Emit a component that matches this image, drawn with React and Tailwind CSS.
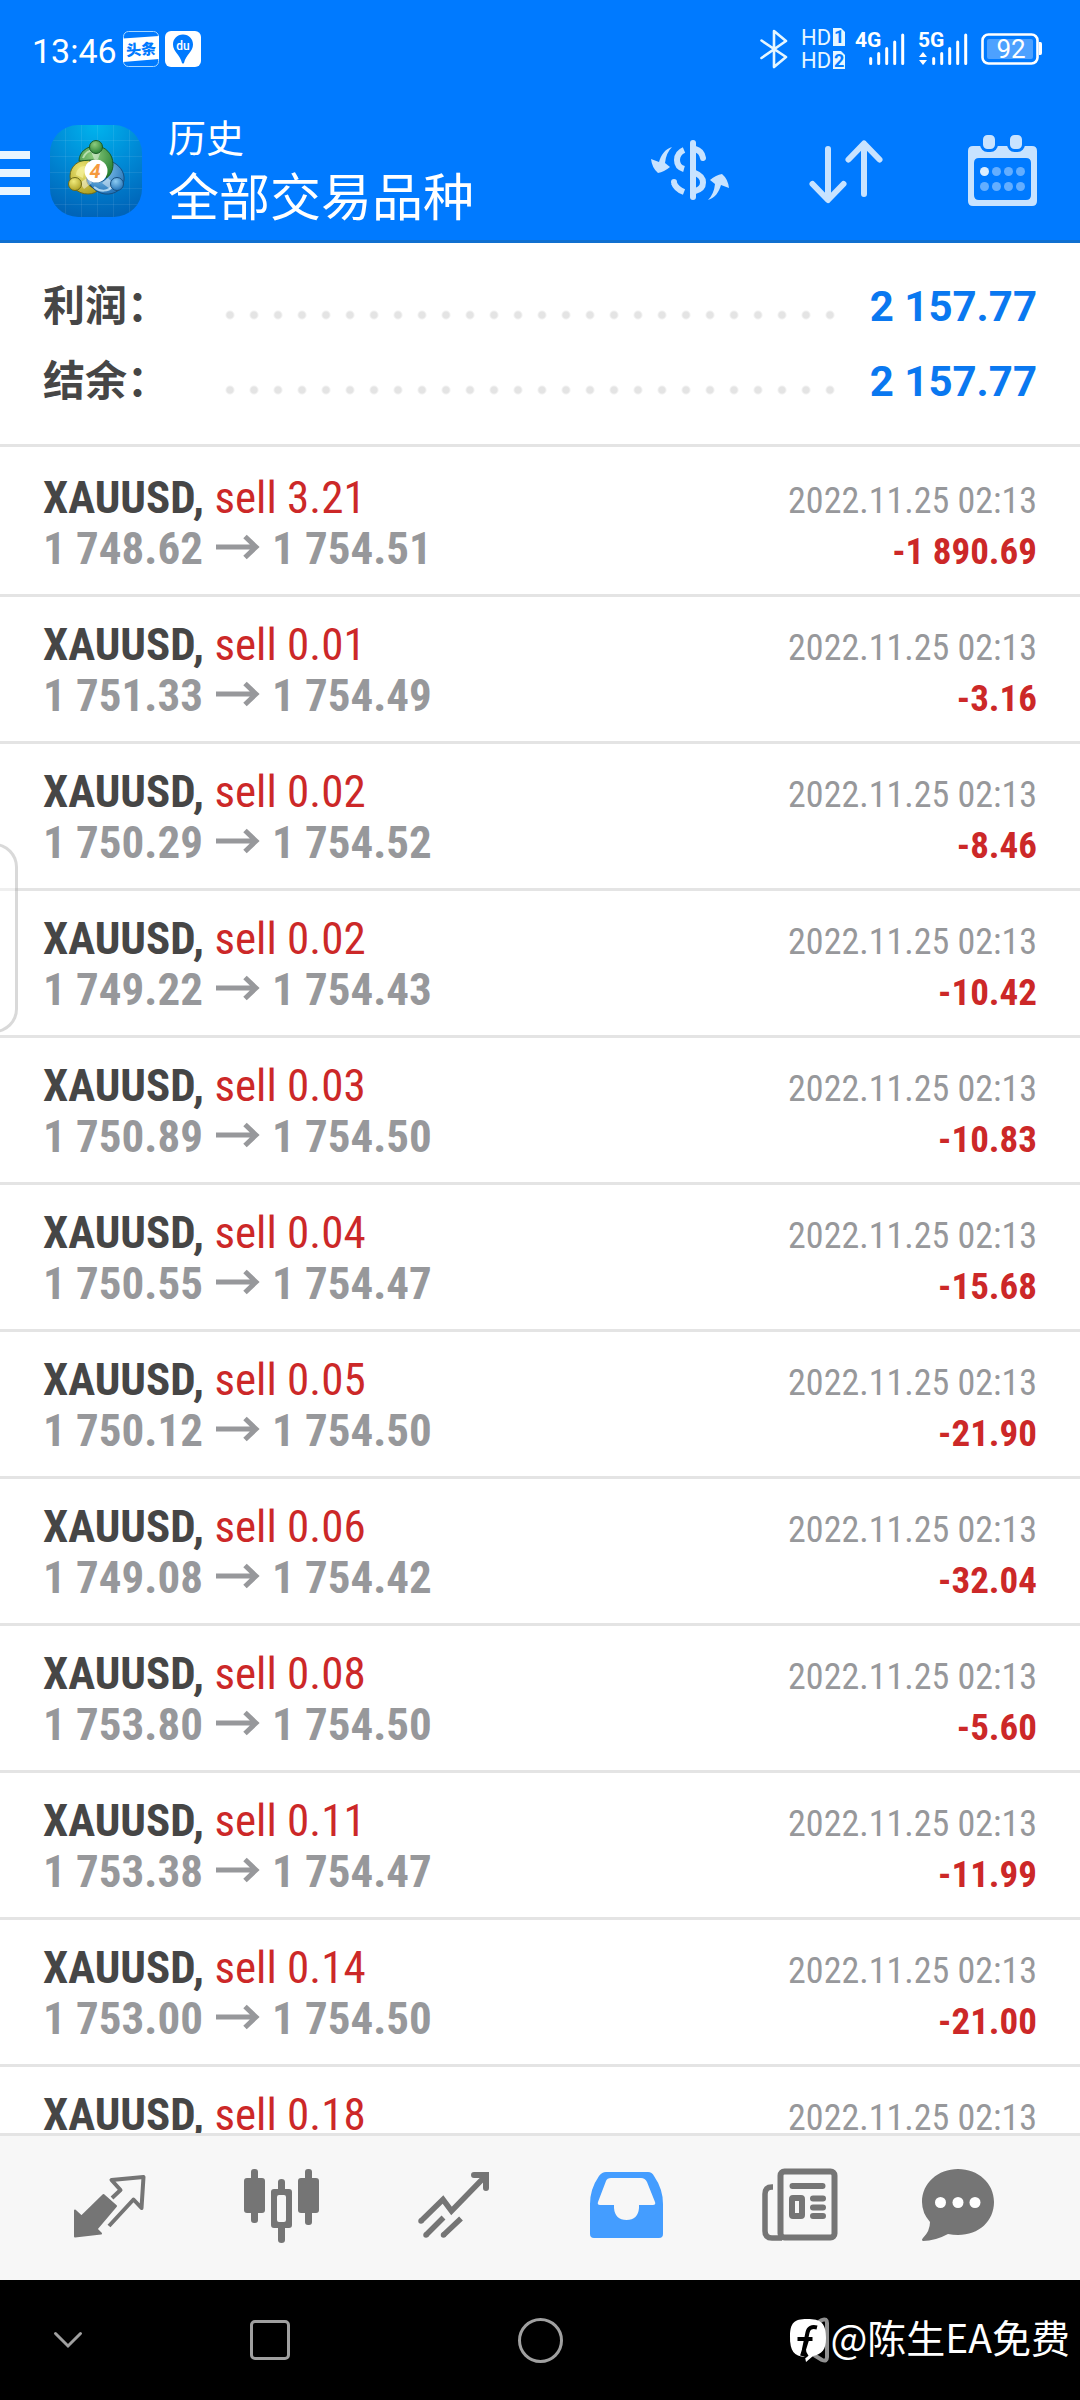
import React from 'react';

const deals = [
    { id: 1, symbol: 'XAUUSD', side: 'sell', volume: '3.21', open: '1 748.62', close: '1 754.51', time: '2022.11.25 02:13', profit: '-1 890.69' },
    { id: 2, symbol: 'XAUUSD', side: 'sell', volume: '0.01', open: '1 751.33', close: '1 754.49', time: '2022.11.25 02:13', profit: '-3.16' },
    { id: 3, symbol: 'XAUUSD', side: 'sell', volume: '0.02', open: '1 750.29', close: '1 754.52', time: '2022.11.25 02:13', profit: '-8.46' },
    { id: 4, symbol: 'XAUUSD', side: 'sell', volume: '0.02', open: '1 749.22', close: '1 754.43', time: '2022.11.25 02:13', profit: '-10.42' },
    { id: 5, symbol: 'XAUUSD', side: 'sell', volume: '0.03', open: '1 750.89', close: '1 754.50', time: '2022.11.25 02:13', profit: '-10.83' },
    { id: 6, symbol: 'XAUUSD', side: 'sell', volume: '0.04', open: '1 750.55', close: '1 754.47', time: '2022.11.25 02:13', profit: '-15.68' },
    { id: 7, symbol: 'XAUUSD', side: 'sell', volume: '0.05', open: '1 750.12', close: '1 754.50', time: '2022.11.25 02:13', profit: '-21.90' },
    { id: 8, symbol: 'XAUUSD', side: 'sell', volume: '0.06', open: '1 749.08', close: '1 754.42', time: '2022.11.25 02:13', profit: '-32.04' },
    { id: 9, symbol: 'XAUUSD', side: 'sell', volume: '0.08', open: '1 753.80', close: '1 754.50', time: '2022.11.25 02:13', profit: '-5.60' },
    { id: 10, symbol: 'XAUUSD', side: 'sell', volume: '0.11', open: '1 753.38', close: '1 754.47', time: '2022.11.25 02:13', profit: '-11.99' },
    { id: 11, symbol: 'XAUUSD', side: 'sell', volume: '0.14', open: '1 753.00', close: '1 754.50', time: '2022.11.25 02:13', profit: '-21.00' },
    { id: 12, symbol: 'XAUUSD', side: 'sell', volume: '0.18', time: '2022.11.25 02:13' },
];

const summary = [
    { label: '利润：', value: '2 157.77' },
    { label: '结余：', value: '2 157.77' },
];

const BluetoothIcon = () => (
    <svg className="w-[28px] h-[40px]" viewBox="0 0 28 40" fill="none" stroke="#E6F6FF" strokeWidth="2.6" strokeLinecap="round" strokeLinejoin="round">
        <path d="M1.5 11.5 26 28 14 38V2l12 10L1.5 29" />
    </svg>
);

const HdIcon = () => (
    <svg className="w-[44px] h-[42px] overflow-visible font-['Roboto']" viewBox="0 0 44 42" fill="#E6F6FF" fontSize="22">
        <text x="0" y="17">HD</text>
        <text x="0" y="40">HD</text>
        <path d="M32 0h8l4 4v14H32zM32 23h8l4 4v14H32z" />
        <g fill="#007AFF" fontSize="18" fontWeight="700">
            <text x="33" y="15">1</text>
            <text x="33" y="39">2</text>
        </g>
    </svg>
);

const SignalIcon = ({ label, traffic }) => (
    <svg className="w-[50px] h-[38px] overflow-visible font-['Roboto']" viewBox="0 0 50 38" fill="white">
        <text x="0" y="17" fontSize="21" fontWeight="700">{label}</text>
        <path d="M15.7 28.5v5M23.7 23.5v10M31.7 18.5v15M39.7 12v21.5M47.7 5v28.5" stroke="white" strokeWidth="3" strokeLinecap="round" />
        {traffic && <path d="M5 22l4 5H1zM5 35l4-5H1z" />}
    </svg>
);

const BatteryIcon = () => (
    <svg className="w-[61px] h-[32px] font-['Roboto']" viewBox="0 0 61 32">
        <rect x="1.5" y="1.5" width="55" height="29" rx="6" fill="none" stroke="white" strokeWidth="2.6" />
        <rect x="6" y="6" width="46" height="20" rx="2" fill="#4DA1FF" />
        <path d="M58 9h1.500q1.500 0 1.500 2v9q0 2-1.500 2H58z" fill="white" />
        <text x="30" y="25" fontSize="26" textAnchor="middle" fill="white">92</text>
    </svg>
);

const ToutiaoIcon = () => (
    <svg className="w-[36px] h-[36px] font-['Noto_Sans_CJK_SC']" viewBox="0 0 36 36">
        <rect x=".5" y=".5" width="35" height="35" rx="5" fill="none" stroke="#A6D6FF" />
        <path d="M0 7.500 36 5v23L0 31z" fill="white" />
        <text x="18" y="24" fontSize="15" fontWeight="900" textAnchor="middle" fill="#007AFF" transform="rotate(-4 18 18)">头条</text>
    </svg>
);

const BaiduMapIcon = () => (
    <svg className="w-[36px] h-[36px] font-['Roboto']" viewBox="0 0 36 36">
        <rect width="36" height="36" rx="6" fill="white" />
        <path d="M18 3.500c-6 0-10 4.500-10 10 0 7 7 10 9 18.500q1 1 2 0c2-8.500 9-11.500 9-18.500 0-5.500-4-10-10-10z" fill="#007AFF" />
        <text x="18" y="18.500" fontSize="12" fontWeight="500" textAnchor="middle" fill="white">du</text>
    </svg>
);

const MenuIcon = () => (
    <svg className="w-[30px] h-[56px]" viewBox="0 0 30 56" fill="#E9F5FF">
        <path d="M0 10h30v8H0zM0 28h30v8H0zM0 46h30v8H0z" />
    </svg>
);

const AppLogo = () => (
    <svg className="w-[92px] h-[92px] shrink-0" viewBox="0 0 92 92">
        <defs>
            <radialGradient id="tile" cx=".5" cy="0" r="1">
                <stop offset="0" stopColor="#00B4EE" />
                <stop offset=".5" stopColor="#008AD6" />
                <stop offset="1" stopColor="#0064B8" />
            </radialGradient>
            <radialGradient id="green" cx=".4" cy=".3" r=".8">
                <stop offset="0" stopColor="#8CCB7E" />
                <stop offset="1" stopColor="#1E7A2C" />
            </radialGradient>
            <radialGradient id="yellow" cx=".4" cy=".3" r=".8">
                <stop offset="0" stopColor="#F0EA7A" />
                <stop offset="1" stopColor="#A89A1C" />
            </radialGradient>
            <radialGradient id="blue" cx=".4" cy=".3" r=".8">
                <stop offset="0" stopColor="#8CCBF2" />
                <stop offset="1" stopColor="#1668B0" />
            </radialGradient>
            <clipPath id="tileClip">
                <rect width="92" height="92" rx="28" />
            </clipPath>
        </defs>
        <rect width="92" height="92" rx="28" fill="url(#tile)" />
        <g clipPath="url(#tileClip)" stroke="white" strokeOpacity=".08" strokeWidth="1">
            <path d="M15.500 0v92M31.500 0v92M47.500 0v92M63.500 0v92M79.500 0v92M0 15.500h92M0 31.500h92M0 47.500h92M0 63.500h92M0 79.500h92" />
        </g>
        {/* yellow figure */}
        <path d="M40 35c-11-1-20 6-20 16 0 11 8 18 18 18 5 0 9-2 11-5-8 0-14-5-12-12z" fill="url(#yellow)" stroke="#6E6A18" strokeWidth="1" />
        <path d="M26 50c0-5 4-9 9-9l-2 12z" fill="#F3EF9A" opacity=".7" />
        {/* blue figure */}
        <path d="M60 36c9 3 15 11 14 19-1 9-9 15-19 14-8-1-15-7-18-15 8 5 17 4 21-3z" fill="url(#blue)" stroke="#174F80" strokeWidth="1" />
        <path d="M44 62c6 5 14 5 19-1" fill="none" stroke="#C9E9FB" strokeWidth="2" opacity=".8" />
        {/* green figure */}
        <path d="M29 36c0-9 8-15 17-15s17 8 17 18c0 7-3 12-7 14 2-9-3-17-13-18-6 0-11 1-14 1z" fill="url(#green)" stroke="#1A5A24" strokeWidth="1" />
        <path d="M33 33c2-5 6-8 12-8" fill="none" stroke="#C7E9BE" strokeWidth="2" opacity=".8" />
        <path d="M41 26h10l-3 8h-4zM30 58l8-6 4 6-8 6zM52 58l6-5 5 5-3 6z" fill="white" opacity=".45" />
        <circle cx="46" cy="22" r="6.500" fill="url(#green)" stroke="#1A5A24" strokeWidth="1" />
        <circle cx="25" cy="59" r="6.500" fill="url(#yellow)" stroke="#6E6A18" strokeWidth="1" />
        <circle cx="67" cy="59" r="6.500" fill="url(#blue)" stroke="#174F80" strokeWidth="1" />
        <circle cx="46" cy="46" r="11.500" fill="white" />
        <text className="font-['Roboto']" x="45" y="53" fontSize="20" fontWeight="700" fontStyle="italic" textAnchor="middle" fill="#F59A3E">4</text>
    </svg>
);

const CurrencyIcon = () => (
    <svg className="w-[90px] h-[90px]" viewBox="0 0 90 90" fill="none" stroke="#C8E3FF" strokeWidth="6">
        <path d="M48 19v54" strokeLinecap="round" />
        <path d="M39 26q-7 3-7 10t7 9M29 59q2 6 10 9" />
        <path d="M50 25q7 2 8 9" strokeLinecap="round" />
        <path d="M50 49q8 3 8 9.500T50 67" />
        <circle cx="29" cy="58" r="3" fill="#C8E3FF" stroke="none" />
        <g fill="#C8E3FF" stroke="none">
            <path d="M27 23c-7 2-11 8-13 15l-8-3q1 9 7 14 6-1 12-6l-5-4q1-10 7-16z" />
            <path d="M27 23c-7 2-11 8-13 15l-8-3q1 9 7 14 6-1 12-6l-5-4q1-10 7-16z" transform="rotate(180 45 49.500)" />
        </g>
    </svg>
);

const SortIcon = () => (
    <svg className="w-[90px] h-[90px]" viewBox="0 0 90 90" fill="none" stroke="#C8E3FF" strokeWidth="6" strokeLinecap="round" strokeLinejoin="round">
        <path d="M27 25v50M11.500 60 27 76l15.500-16M63 70V20M47.500 35.500 63 19.500l15.500 16" />
    </svg>
);

const CalendarIcon = () => (
    <svg className="w-[90px] h-[90px]" viewBox="0 0 90 90">
        <path d="M16 22h59q5 0 5 5v50q0 5-5 5H16q-5 0-5-5V27q0-5 5-5zM22 34q-5 0-5 5v32q0 5 5 5h47q5 0 5-5V39q0-5-5-5z" fill="#C8E3FF" fillRule="evenodd" />
        <g fill="#C8E3FF" stroke="#007AFF" strokeWidth="3">
            <rect x="24.500" y="9.500" width="15" height="17" rx="6" />
            <rect x="51.500" y="9.500" width="15" height="17" rx="6" />
        </g>
        <g fill="#64AEFF">
            <circle cx="39.500" cy="47.500" r="4.500" />
            <circle cx="51.500" cy="47.500" r="4.500" />
            <circle cx="63.500" cy="47.500" r="4.500" />
            <circle cx="27.500" cy="62.500" r="4.500" />
            <circle cx="39.500" cy="62.500" r="4.500" />
            <circle cx="51.500" cy="62.500" r="4.500" />
            <circle cx="63.500" cy="62.500" r="4.500" />
        </g>
        <circle cx="27.500" cy="47.500" r="4.500" fill="#DCEEFF" />
    </svg>
);

const QuotesIcon = () => (
    <svg className="w-[108px] h-[108px]" viewBox="0 0 108 108" stroke="#757575" strokeLinejoin="round">
        <path d="M19 56.500l6.500 6L47.500 41 60 52 40.500 75l4.500 4.500L19 82.500z" fill="#757575" strokeWidth="2" />
        <path d="M56 44 64.500 36 55.500 26l32-3-2 31-8-8.500L53 72" fill="none" strokeWidth="4" />
    </svg>
);

const ChartIcon = () => (
    <svg className="w-[108px] h-[108px]" viewBox="0 0 108 108" fill="#757575">
        <rect x="15" y="24" width="21" height="35" rx="3" />
        <rect x="22" y="15" width="7" height="54" rx="3" />
        <rect x="69" y="24" width="21" height="35" rx="3" />
        <rect x="76" y="15" width="7" height="56" rx="3" />
        <path d="M49 35v-7q0-3 3.500-3t3.500 3v7h4q3 0 3 3v33q0 3-3 3h-4v12q0 3-3.500 3T49 86V74h-4q-3 0-3-3V38q0-3 3-3zM50 41q-2 0-2 2v23q0 2 2 2h5q2 0 2-2V43q0-2-2-2z" fillRule="evenodd" />
    </svg>
);

const TradeIcon = () => (
    <svg className="w-[108px] h-[108px]" viewBox="0 0 108 108" fill="none" stroke="#757575" strokeWidth="5.500">
        <path d="M20 67l22-21.500L50.500 57 84 22.500M42.500 63.500 25 81M60 64.500 42.500 81" />
        <path d="M73 21h12v13" strokeLinecap="round" strokeWidth="6" />
        <g fill="#757575" stroke="none">
            <circle cx="20" cy="67" r="2.750" />
            <circle cx="25" cy="81" r="2.750" />
            <circle cx="42.500" cy="81" r="2.750" />
        </g>
    </svg>
);

const HistoryIcon = () => (
    <svg className="w-[108px] h-[108px]" viewBox="0 0 108 108" fill="#449DFF">
        <path d="M32 18h42q4 0 6 4 9 13 9 28v30q0 4-4 4H20q-4 0-4-4V50q0-15 9-28 3-4 7-4zM37 24q-4 0-5 3l-8 21q-1 3 2 3h14v3q1 12 12.500 12T65 54v-3h14q3 0 2-3l-8-20q-2-4-6-4z" fillRule="evenodd" />
    </svg>
);

const NewsIcon = () => (
    <svg className="w-[108px] h-[108px]" viewBox="0 0 108 108" fill="none" stroke="#757575" strokeWidth="6">
        <rect x="34.500" y="17.500" width="54" height="66" rx="4" />
        <path d="M27 33h-1q-7 0-7 7v37q0 7 7 7h10" strokeWidth="5.500" />
        <path d="M46.500 32h30M67 44.500h10M67 53.500h10M67 62h10" strokeLinecap="round" />
        <rect x="46" y="44" width="10" height="18" rx="1" />
    </svg>
);

const MessagesIcon = () => (
    <svg className="w-[108px] h-[108px]" viewBox="0 0 108 108">
        <path d="M39 15c20 0 36 14 36 33S60 81 39 81q-5 0-10-1-13 7-25 7-2-1 0-3 7-7 7-16-8-9-8-20c0-19 16-33 36-33z" fill="#757575" />
        <g fill="white">
            <circle cx="21.500" cy="48.500" r="5.500" />
            <circle cx="39" cy="48.500" r="5.500" />
            <circle cx="56" cy="48.500" r="5.500" />
        </g>
    </svg>
);

const tabs = [
    { name: 'quotes', Icon: QuotesIcon },
    { name: 'chart', Icon: ChartIcon },
    { name: 'trade', Icon: TradeIcon },
    { name: 'history', Icon: HistoryIcon },
    { name: 'news', Icon: NewsIcon },
    { name: 'messages', Icon: MessagesIcon },
];

const StatusBar = () => (
    <div className="h-[98px] flex items-center justify-between pl-8 pr-[38px] text-white">
        <div className="flex items-center gap-[6px]">
            <span className="w-[85px] pt-1 text-[34px] leading-[40px]">13:46</span>
            <ToutiaoIcon />
            <BaiduMapIcon />
        </div>
        <div className="flex items-center gap-[13px]">
            <BluetoothIcon />
            <div className="flex items-center gap-[10px]">
                <HdIcon />
                <SignalIcon label="4G" />
            </div>
            <SignalIcon label="5G" traffic />
            <BatteryIcon />
        </div>
    </div>
);

const AppBar = () => (
    <div className="h-[142px] flex items-center pr-[33px]">
        <button type="button" aria-label="menu">
            <MenuIcon />
        </button>
        <div className="ml-5 mr-[26px] pt-1">
            <AppLogo />
        </div>
        <h1 className="flex-1 text-white">
            <span className="block text-[38px] leading-[60px]">历史</span>
            <span className="block text-[51px] leading-[60px]">全部交易品种</span>
        </h1>
        <div className="flex gap-[66px]">
            <button type="button" aria-label="currency"><CurrencyIcon /></button>
            <button type="button" aria-label="sort"><SortIcon /></button>
            <button type="button" aria-label="calendar"><CalendarIcon /></button>
        </div>
    </div>
);

const DealRow = ({ deal }) => (
    <li className="px-[43px] pt-[22px] pb-5 border-b-3 border-[#E4E4E4] leading-[51px] font-['Roboto_Condensed','Roboto',sans-serif]">
        <div className="h-[51px] flex items-baseline justify-between">
            <p className="text-[45px] font-bold text-[#464646]">
                {deal.symbol}, <span className="font-normal text-[#CC2828]">{deal.side} {deal.volume}</span>
            </p>
            <time className="text-[36px] text-[#97989B]">{deal.time}</time>
        </div>
        {deal.profit && (
            <div className="h-[51px] flex items-baseline justify-between">
                <p className="text-[45px] font-bold text-[#97989B]">
                    {deal.open}
                    <svg className="inline-block align-baseline w-[45px] h-[31px] mx-[12px]" viewBox="0 0 45 31" fill="none" stroke="#97989B" strokeWidth="5">
                        <path d="M1 14h41M30 3.500 41 14 30 24.500" />
                    </svg>
                    {deal.close}
                </p>
                <span className="text-[37px] font-bold text-[#CC2828]">{deal.profit}</span>
            </div>
        )}
    </li>
);

const App = () => {
    return (
        <div className="relative h-screen flex flex-col overflow-hidden bg-white font-['Roboto','Noto_Sans_CJK_SC',sans-serif]">
            <header className="bg-[#007AFF] border-b-3 border-[#1070D0]">
                <StatusBar />
                <AppBar />
            </header>

            <main className="flex-1 min-h-0 flex flex-col">
                <section className="px-[43px] pt-[26px] pb-[25px] border-b-3 border-[#E4E4E4]">
                    {summary.map((item) => (
                        <div key={item.label} className="h-[75px] flex items-center text-[42px] font-bold">
                            <span className="w-[175px] text-[#464646]">{item.label}</span>
                            <span className="flex-1 h-6 mt-4 bg-[radial-gradient(circle,#E4E4E4_3px,transparent_5px)] bg-[length:24px_24px]" />
                            <span className="w-[195px] text-right text-[#0A78F0]">{item.value}</span>
                        </div>
                    ))}
                </section>
                <ul className="flex-1 min-h-0 overflow-hidden pt-[3px]">
                    {deals.map((deal) => (
                        <DealRow key={deal.id} deal={deal} />
                    ))}
                </ul>
            </main>

            <nav className="h-[147px] flex items-center pl-6 pr-[21px] bg-[#F7F7F7] border-t-3 border-[#E4E4E4]">
                {tabs.map(({ name, Icon }) => (
                    <button key={name} type="button" aria-label={name} className="flex-1 flex justify-center">
                        <Icon />
                    </button>
                ))}
            </nav>

            <footer className="relative h-[120px] flex items-center bg-black">
                <button type="button" aria-label="hide" className="w-1/8 flex justify-center">
                    <svg className="w-[30px] h-[18px]" viewBox="0 0 30 18" fill="none" stroke="#A0A0A0" strokeWidth="3" strokeLinecap="round">
                        <path d="M2.500 2.500 15 15 27.500 2.500" />
                    </svg>
                </button>
                <button type="button" aria-label="recents" className="w-1/4 flex justify-center">
                    <span className="w-10 h-10 border-3 border-[#A0A0A0] rounded-[5px]" />
                </button>
                <button type="button" aria-label="home" className="w-1/4 flex justify-center">
                    <span className="w-[45px] h-[45px] border-3 border-[#A0A0A0] rounded-full" />
                </button>
                <button type="button" aria-label="back" className="w-1/4 flex justify-center">
                    <svg className="w-[42px] h-[48px]" viewBox="0 0 42 48" fill="none" stroke="#909090" strokeWidth="4" strokeLinejoin="round">
                        <path d="M4 22Q2 24 4 26L33 44Q38 46 38 41V7Q38 2 33 4z" />
                    </svg>
                </button>
                <div className="absolute right-[10px] top-1/2 -translate-y-1/2 flex items-center gap-1 text-white">
                    <svg className="w-[37px] h-[45px]" viewBox="0 0 37 45">
                        <path d="M18 1C5 1 1 5 1 19s4 19 15 20l1 5 7-6c9-2 13-6 13-18C37 5 32 1 18 1z" fill="white" />
                        <path d="M13 38 18 22M8.500 21h15M28 9.500q-8-2-9.500 5L15 31q-.500 4 3 8" fill="none" stroke="black" strokeWidth="4" />
                    </svg>
                    <span className="pb-2 text-[39px] leading-[56px] font-['Noto_Sans_CJK_SC',sans-serif]">@陈生EA免费</span>
                </div>
            </footer>

            {/* edge panel handle */}
            <div className="absolute top-[843px] -left-[30px] w-12 h-[190px] rounded-[26px] border-3 border-black/15 bg-white/40" />
        </div>
    );
};

export default App;
